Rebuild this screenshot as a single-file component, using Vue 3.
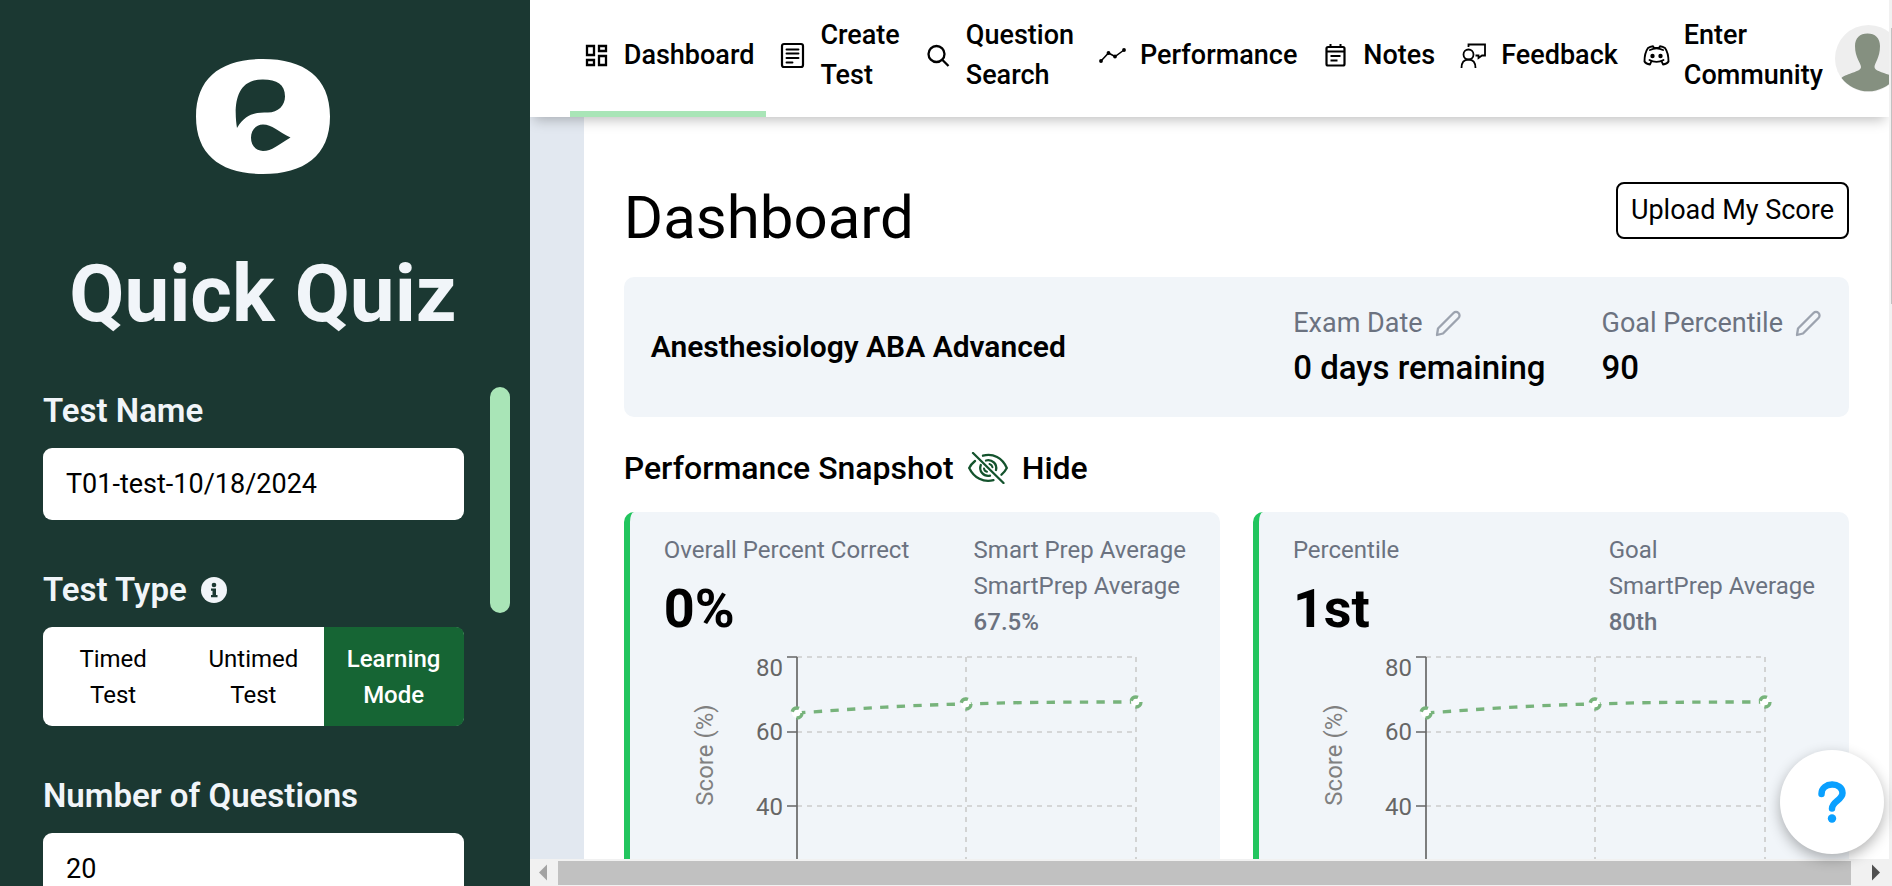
<script setup>
import { ref } from 'vue'

const testName = ref('T01-test-10/18/2024')
const questionCount = ref('20')
const testType = ref('Learning Mode')
const testTypes = ['Timed Test', 'Untimed Test', 'Learning Mode']

const navItems = [
  { label: 'Dashboard', icon: 'dashboard', active: true },
  { label: 'Create Test', icon: 'create' },
  { label: 'Question Search', icon: 'search' },
  { label: 'Performance', icon: 'performance' },
  { label: 'Notes', icon: 'notes' },
  { label: 'Feedback', icon: 'feedback' },
  { label: 'Enter Community', icon: 'community' },
]

const examStats = [
  { label: 'Exam Date', value: '0 days remaining' },
  { label: 'Goal Percentile', value: '90' },
]

const cards = [
  { label: 'Overall Percent Correct', value: '0%', compare: 'Smart Prep Average', average: '67.5%' },
  { label: 'Percentile', value: '1st', compare: 'Goal', average: '80th' },
]

const points = [
  [133, 64],
  [302, 55],
  [472, 53],
]
</script>

<template>
  <div class="app">
    <aside class="sidebar">
      <svg class="logo" viewBox="0 0 134 115" aria-hidden="true">
        <path fill="#fff" fill-rule="evenodd" d="M67 0C26 0 0 18 0 57.500S26 115 67 115s67-18 67-57.500S108 0 67 0ZM41 69C38 50 38 20 67 20.500c14 0 22 5 22 17 0 9-7 16-17 16-13 0-22 1-31 15.500ZM67 65.500c9 0 15 7 27.500 13C82 86 76 92 67 92c-16 0-16-26.500 0-26.500Z" />
      </svg>
      <h2 class="quiz-title">Quick Quiz</h2>
      <form class="quiz-form" @submit.prevent>
        <div class="fields">
          <label class="field-label" for="test-name">Test Name</label>
          <input id="test-name" v-model="testName" class="text-input" type="text" />
          <div id="type-label" class="field-label">
            Test Type
            <svg class="info" viewBox="0 0 26 26" aria-hidden="true">
              <circle cx="13" cy="13" r="13" fill="#f1f5f9" />
              <circle cx="13" cy="8" r="2.300" fill="#1b3832" />
              <path d="M10 11.500h5v6.500h1.500v2.200h-6.500V18h1.500v-4.300H10Z" fill="#1b3832" />
            </svg>
          </div>
          <div class="segments" role="group" aria-labelledby="type-label">
            <button
              v-for="type in testTypes"
              :key="type"
              type="button"
              class="segment"
              :class="{ selected: type === testType }"
              @click="testType = type"
            >{{ type }}</button>
          </div>
          <label class="field-label" for="question-count">Number of Questions</label>
          <input id="question-count" v-model="questionCount" class="text-input" type="text" />
        </div>
        <div class="form-scroll"></div>
      </form>
    </aside>

    <div class="main">
      <header class="topbar">
        <nav class="nav">
          <a v-for="item in navItems" :key="item.label" href="#" class="nav-item" :class="{ active: item.active }">
            <svg v-if="item.icon === 'dashboard'" class="nav-icon" viewBox="0 0 27 27">
              <path d="M4 4h7v9H4ZM16 4h7v5h-7ZM16 14h7v9h-7ZM4 18h7v5H4Z" fill="none" stroke="#000" stroke-width="2.300" />
            </svg>
            <svg v-else-if="item.icon === 'create'" class="nav-icon" viewBox="0 0 27 27">
              <rect x="3" y="2" width="21" height="23" rx="2" fill="none" stroke="#000" stroke-width="2.200" />
              <path d="M7.500 7.500h12M7.500 11.500h12M7.500 16h12M7.500 20.500h6" stroke="#000" stroke-width="1.900" stroke-linecap="round" />
            </svg>
            <svg v-else-if="item.icon === 'search'" class="nav-icon" viewBox="0 0 27 27">
              <circle cx="11.500" cy="12" r="8" fill="none" stroke="#000" stroke-width="2.300" />
              <path d="m17.500 18 6 6" stroke="#000" stroke-width="2.300" />
            </svg>
            <svg v-else-if="item.icon === 'performance'" class="nav-icon" viewBox="0 0 27 27">
              <path d="m2 19 7.500-8 6.500 3.500L25 8" fill="none" stroke="#000" stroke-width="1.500" />
              <path d="M2 19h.01M9.500 11h.01M16 14.500h.01M25 8h.01" stroke="#000" stroke-width="3.800" stroke-linecap="round" />
            </svg>
            <svg v-else-if="item.icon === 'notes'" class="nav-icon" viewBox="0 0 27 27">
              <rect x="4.500" y="5" width="18" height="18.500" rx="1.500" fill="none" stroke="#000" stroke-width="2.200" />
              <path d="M4.500 9.500h18M8.500 2v3M18.500 2v3M8.500 14h10M8.500 18.500h7" stroke="#000" stroke-width="2" />
            </svg>
            <svg v-else-if="item.icon === 'feedback'" class="nav-icon" viewBox="0 0 27 27">
              <g fill="none" stroke="#000" stroke-width="1.800">
                <circle cx="8.500" cy="12.500" r="5" />
                <path d="M1.500 26c0-5 2.500-8.300 7-8.300s7 3.300 7 8.300M8.500 5V2.500H25v11h-3L18.500 16v-2.500h-3" />
              </g>
            </svg>
            <svg v-else class="nav-icon" viewBox="0 0 27 27">
              <g fill="none" stroke="#000" stroke-width="1.900" stroke-linecap="round" stroke-linejoin="round">
                <path d="M8.500 19 7 22.500C4 22 2 20.500 1.500 19.500c0-5 1-10 3.500-13.500 1.500-1 3-1.500 5-1.800l1 1.800h5l1-1.800c2 .3 3.500.8 5 1.800 2.500 3.500 3.500 8.500 3.500 13.500-.5 1-2.500 2.500-5.500 3L18.500 19" />
                <path d="M7 8c4-2 9-2 13 0M6.500 18c4 2.500 10 2.500 14 0" />
              </g>
              <circle cx="9.500" cy="14" r="2.200" />
              <circle cx="17.500" cy="14" r="2.200" />
            </svg>
            <span>{{ item.label }}</span>
          </a>
        </nav>
        <button class="avatar" type="button" aria-label="Account">
          <svg viewBox="0 0 67 67">
            <circle cx="33.500" cy="33.500" r="33.500" fill="#eeeeee" />
            <path d="M6.500 53C12 48 26 47 26 42c0-4-6-9-6-21 0-8 5-12.500 12.500-12.500S45 13 45 21c0 12-5.500 17-5.500 21 0 5 14 6 20.500 11a33.500 33.500 0 0 1-53.500 0Z" fill="#859080" />
          </svg>
        </button>
      </header>

      <div class="viewport">
        <main class="content">
          <div class="title-row">
            <h1>Dashboard</h1>
            <button class="upload" type="button">Upload My Score</button>
          </div>

          <section class="exam">
            <h3>Anesthesiology ABA Advanced</h3>
            <div class="exam-stats">
              <div v-for="stat in examStats" :key="stat.label">
                <div class="stat-label">
                  {{ stat.label }}
                  <button type="button" class="icon-button" :aria-label="'Edit ' + stat.label">
                    <svg class="pencil" viewBox="0 0 27 27">
                      <path d="m2 25 1-6.500L18.500 3a3.500 3.500 0 0 1 5 5L8 23.500Z" fill="none" stroke="#9ca3af" stroke-width="2.300" stroke-linejoin="round" />
                    </svg>
                  </button>
                </div>
                <div class="stat-value">{{ stat.value }}</div>
              </div>
            </div>
          </section>

          <div class="snapshot">
            <h3>Performance Snapshot</h3>
            <button class="hide-button" type="button">
              <svg class="eye" viewBox="0 0 40 32">
                <g fill="none" stroke="#14532d" stroke-width="2.300" stroke-linecap="round">
                  <path d="M15 3.700C25 .8 34.500 6 38.800 16c-1.300 2.500-3 4.800-5.300 6.700M7 9C4.500 11 2.500 13.300 1.200 16c4.800 10 14.300 14.800 24.300 12.200" />
                  <path d="M18 8.500C24 7 29.500 12 28 18M12.800 13C10.500 19 15.500 25 22 23.700" />
                  <path d="M21.500 12c1.800.5 2.700 1.600 3 3.200M16 16.500c.3 1.800 1.300 2.900 3 3.300" stroke-width="2" />
                  <path d="m5 1 30.500 30" />
                </g>
              </svg>
              Hide
            </button>
          </div>

          <div class="cards">
            <article v-for="card in cards" :key="card.label" class="card">
              <div class="card-head">
                <div>
                  <div>{{ card.label }}</div>
                  <div class="score">{{ card.value }}</div>
                </div>
                <div>
                  <div>{{ card.compare }}</div>
                  <div>SmartPrep Average</div>
                  <div class="average">{{ card.average }}</div>
                </div>
              </div>
              <svg class="chart" width="522" height="310" viewBox="0 0 522 310">
                <g stroke="#cccccc" stroke-width="1.670" stroke-dasharray="5 5" fill="none">
                  <path d="M133 8H472M133 83H472M133 157H472M133 232H472M302 8V307M472 8V307" />
                </g>
                <path d="M133 8V307M123 8h10M123 83h10M123 157h10M123 232h10" stroke="#666666" stroke-width="1.670" fill="none" />
                <g class="tick" text-anchor="end">
                  <text x="119" y="27">80</text>
                  <text x="119" y="91">60</text>
                  <text x="119" y="166">40</text>
                </g>
                <text class="axis" text-anchor="middle" transform="translate(49 106) rotate(-90)">Score (%)</text>
                <g stroke="#77b37b" stroke-width="3.330" stroke-dasharray="8.330 8.330">
                  <path d="M133 64C190 60 245 56 302 55C360 53 415 53 472 53" fill="none" />
                  <circle v-for="p in points" :key="p[0]" :cx="p[0]" :cy="p[1]" r="5" fill="#fff" />
                </g>
              </svg>
            </article>
          </div>
        </main>
      </div>

      <div class="hscroll">
        <svg class="arrow" viewBox="0 0 28 27"><path d="M17 5.500v16L9 13.500Z" fill="#a3a3a3" /></svg>
        <div class="hthumb"></div>
        <svg class="arrow end" viewBox="0 0 38 27"><path d="M21 5.500v16l8-8Z" fill="#505050" /></svg>
      </div>
    </div>

    <div class="vscroll"><div class="vthumb"></div></div>

    <button class="help" type="button" aria-label="Help">
      <svg viewBox="0 0 28 42">
        <path d="M3.500 13C3.500 .5 24.500 .5 24.500 12c0 7-10.500 8.500-10.500 15.500" fill="none" stroke="#0aa0ff" stroke-width="6.500" stroke-linecap="round" />
        <circle cx="14" cy="37.500" r="4.200" fill="#0aa0ff" />
      </svg>
    </button>
  </div>
</template>

<style>
body {
  overflow: hidden;
}
</style>

<style scoped>
.app {
  display: flex;
  height: 100vh;
  overflow: hidden;
  font-family: Roboto, "Liberation Sans", sans-serif;
  font-size: 24px;
  line-height: 36px;
  color: #000;
}
.app *,
.app {
  box-sizing: border-box;
}
h1, h2, h3 {
  margin: 0;
}
button {
  font: inherit;
  color: inherit;
  border: 0;
  padding: 0;
  background: none;
  cursor: pointer;
}
svg {
  display: block;
  flex: none;
}
.sidebar {
  flex: none;
  width: 28%;
  display: flex;
  flex-direction: column;
  align-items: center;
  padding-right: 4px;
  background: #1b3832;
  color: #f1f5f9;
}
.logo {
  width: 134px;
  height: 115px;
  margin: 59px 0 72px;
}
.quiz-title {
  font-size: 80px;
  line-height: 96px;
  font-weight: 700;
}
.quiz-form {
  align-self: stretch;
  display: flex;
  gap: 26px;
  margin-top: 45px;
  padding: 0 16px 0 43px;
}
.fields {
  flex: 1;
  min-width: 0;
}
.form-scroll {
  width: 20px;
  height: 226px;
  border-radius: 10px;
  background: #a9e5b7;
}
.field-label {
  display: flex;
  align-items: center;
  gap: 14px;
  height: 48px;
  margin-bottom: 13px;
  font-size: 33px;
  line-height: 48px;
  font-weight: 600;
}
.info {
  width: 26px;
  height: 26px;
}
.text-input {
  display: block;
  width: 100%;
  height: 72px;
  margin-bottom: 46px;
  padding: 0 23px;
  border: 0;
  border-radius: 9px;
  background: #fff;
  font: inherit;
  font-size: 27px;
}
.segments {
  display: grid;
  grid-template-columns: repeat(3, 1fr);
  margin-bottom: 46px;
  border-radius: 9px;
  background: #fff;
  color: #000;
}
.segment {
  padding: 14px 20px 13px;
}
.segment.selected {
  background: #166534;
  color: #fff;
  font-weight: 500;
}
.segment:last-child {
  border-radius: 0 8px 8px 0;
}
.main {
  flex: 1;
  min-width: 0;
  display: flex;
  flex-direction: column;
  overflow: hidden;
}
.topbar {
  position: relative;
  z-index: 1;
  flex: none;
  display: flex;
  align-items: center;
  height: 117px;
  padding-left: 40px;
  background: #fff;
  box-shadow: 0 7px 12px -4px rgba(0, 0, 0, 0.25);
}
.nav {
  display: flex;
  flex: none;
  height: 100%;
}
.nav-item {
  display: flex;
  align-items: center;
  gap: 14px;
  padding: 0 12px 7px 13px;
  color: #000;
  text-decoration: none;
  font-size: 27px;
  line-height: 40px;
  font-weight: 500;
}
.nav-item span {
  width: min-content;
}
.nav-item.active {
  box-shadow: inset 0 -6px #a9e5b7;
}
.nav-icon {
  width: 27px;
  height: 27px;
}
.avatar svg {
  width: 67px;
  height: 67px;
}
.viewport {
  flex: 1;
  min-height: 0;
  overflow: hidden;
  padding-left: 54px;
  background: #e2e8f0;
}
.content {
  padding: 60px 40px;
  background: #fff;
}
.title-row {
  display: flex;
  align-items: flex-start;
  justify-content: space-between;
  height: 100px;
}
h1 {
  font-size: 60px;
  line-height: 82px;
  font-weight: 400;
}
.upload {
  margin-top: 5px;
  padding: 7px 13px 8px;
  border: 2px solid #000;
  border-radius: 8px;
  font-size: 27px;
  line-height: 38px;
}
.exam {
  display: flex;
  align-items: center;
  justify-content: space-between;
  height: 140px;
  padding: 0 27px;
  border-radius: 10px;
  background: #f1f5f9;
}
.exam h3 {
  font-size: 30px;
  font-weight: 600;
}
.exam-stats {
  display: flex;
  gap: 56px;
}
.stat-label {
  display: flex;
  align-items: center;
  gap: 12px;
  font-size: 27px;
  line-height: 40px;
  color: #6b7280;
}
.pencil {
  width: 27px;
  height: 27px;
}
.stat-value {
  padding-top: 2px;
  font-size: 33px;
  line-height: 46px;
  font-weight: 500;
}
.snapshot {
  display: flex;
  align-items: center;
  gap: 14px;
  height: 95px;
  padding-top: 7px;
}
.snapshot h3,
.hide-button {
  font-size: 32px;
  font-weight: 500;
}
.hide-button {
  display: flex;
  align-items: center;
  gap: 14px;
}
.eye {
  width: 40px;
  height: 32px;
}
.cards {
  display: grid;
  grid-template-columns: 1fr 1fr;
  gap: 33px;
}
.card {
  min-width: 0;
  padding: 20px 34px 0;
  border-left: 6px solid #22c55e;
  border-radius: 10px;
  background: #f1f5f9;
}
.card-head {
  display: flex;
  justify-content: space-between;
  color: #6b7280;
}
.score {
  margin-top: 12px;
  font-size: 54px;
  line-height: 58px;
  font-weight: 700;
  color: #000;
}
.average {
  font-weight: 500;
}
.chart {
  margin-top: 9px;
}
.tick {
  fill: #666666;
}
.axis {
  fill: #808080;
}
.hscroll {
  flex: none;
  display: flex;
  height: 27px;
  background: #f1f1f1;
}
.arrow {
  width: 28px;
  height: 27px;
}
.arrow.end {
  width: 38px;
}
.hthumb {
  flex: 1;
  margin: 2px 0 1px;
  background: #c1c1c1;
}
.vscroll {
  flex: none;
  width: 3px;
  padding: 28px 0 0 2px;
  background: #f1f1f1;
}
.vthumb {
  height: 276px;
  background: #c1c1c1;
}
.help {
  position: fixed;
  z-index: 2;
  right: 8px;
  bottom: 32px;
  display: grid;
  place-items: center;
  width: 104px;
  height: 104px;
  border-radius: 50%;
  background: #fff;
  box-shadow: 0 5px 14px rgba(0, 0, 0, 0.3);
}
.help svg {
  width: 28px;
  height: 42px;
}
</style>
